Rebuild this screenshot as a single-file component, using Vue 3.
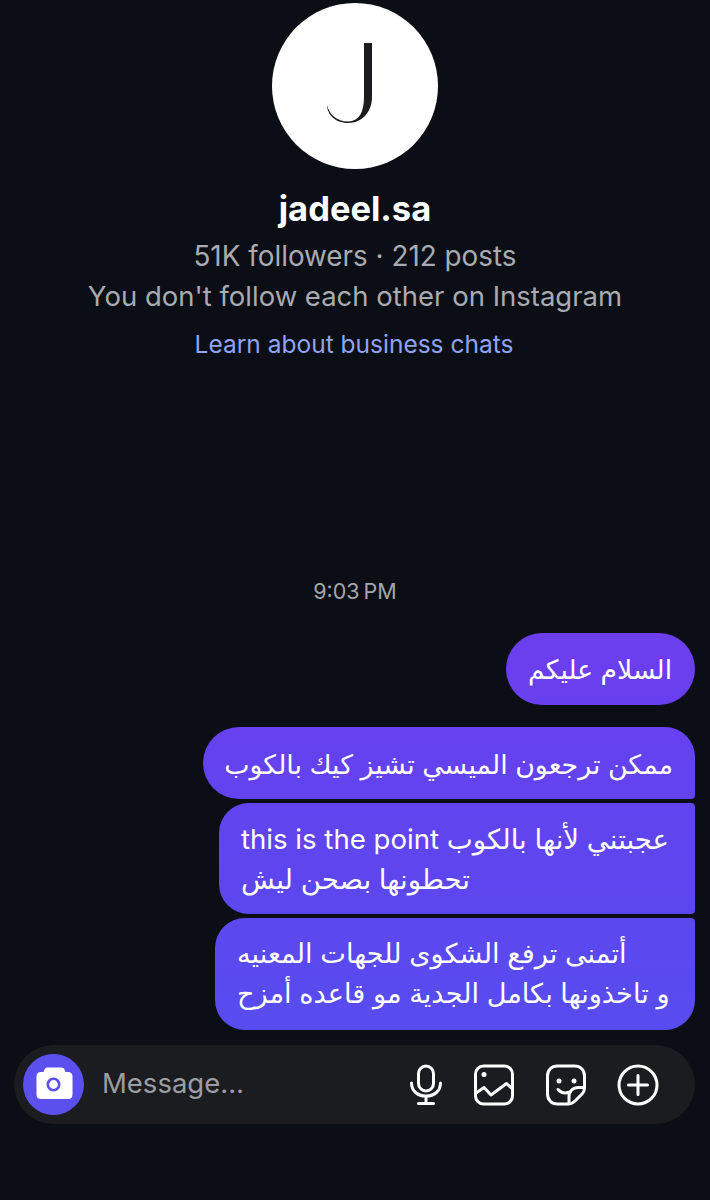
<template>
  <div class="chat">
    <header class="profile">
      <div class="avatar">
        <svg width="166" height="166" viewBox="0 0 166 166">
          <path d="M92 40h8v54c0 15-10 26-24 26-13 0-21-9-21-18 2 9 10 16.500 21 16.500 11 0 16-9 16-24.500z" fill="#1c1c1e" />
        </svg>
      </div>
      <h1 class="name">jadeel.sa</h1>
      <p class="stats counts">51K followers · 212 posts</p>
      <p class="stats">You don't follow each other on Instagram</p>
      <a class="learn">Learn about business chats</a>
    </header>

    <div class="time">9:03&#8201;PM</div>

    <div class="messages">
      <div
        v-for="(msg, index) in messages"
        :key="index"
        class="bubble"
        :class="msg.kind"
        dir="rtl"
      >
        <div v-for="line in msg.lines" :key="line">{{ line }}</div>
      </div>
    </div>

    <div class="composer">
      <div class="camera">
        <svg width="44" height="44" viewBox="0 0 44 44">
          <path d="M15.500 4.500h14c1.500 0 2.500.8 3 2l1 2.500H36c3 0 4.500 1.500 4.500 4.500v18c0 3-1.500 4.500-4.500 4.500H9c-3 0-4.500-1.500-4.500-4.500v-18C4.500 10.500 6 9 9 9h2.500l1-2.500c.5-1.200 1.500-2 3-2z" fill="#fff" />
          <circle cx="21.500" cy="21.500" r="5.700" fill="none" stroke="#5b50ee" stroke-width="2.600" />
        </svg>
      </div>
      <span class="placeholder">Message...</span>
      <div class="actions">
        <svg width="34" height="42" viewBox="0 0 34 42" fill="none" stroke="#fff" stroke-width="3" stroke-linecap="round">
          <rect x="9.500" y="2" width="15" height="25" rx="7.500" />
          <path d="M2.500 19c0 8 6 13 14.500 13s14.500-5 14.500-13M17 32v7.500M9.500 39.500h15" />
        </svg>
        <svg width="42" height="42" viewBox="0 0 42 42" fill="none" stroke="#fff" stroke-width="3" stroke-linejoin="round" stroke-linecap="round">
          <rect x="2.500" y="2" width="37" height="38" rx="8" />
          <circle cx="11" cy="10.500" r="2.500" fill="#fff" stroke="none" />
          <path d="M3 29l8-5.500 7 7.500 15.500-11.500 6 5.500" />
        </svg>
        <svg width="42" height="42" viewBox="0 0 42 42" fill="none" stroke="#fff" stroke-width="3" stroke-linejoin="round" stroke-linecap="round">
          <path d="M39.500 21.500V12c0-6-4-10-10-10H12.500c-6 0-10 4-10 10v18c0 6 4 10 10 10H23c3 0 5-1 7-3l7-7c2-2 2.500-4 2.500-6z" />
          <path d="M24 39.500V33c0-6 4-9.500 9.500-9.500h6" />
          <path d="M13 25.500c3 3.500 8 4 12.500 2.500" />
          <circle cx="14" cy="17" r="2.500" fill="#fff" stroke="none" />
          <circle cx="29" cy="17" r="2.500" fill="#fff" stroke="none" />
        </svg>
        <svg width="42" height="42" viewBox="0 0 42 42" fill="none" stroke="#fff" stroke-width="3" stroke-linecap="round">
          <circle cx="21" cy="21" r="19" />
          <path d="M21 11.500v19M11.500 21h19" />
        </svg>
      </div>
    </div>
  </div>
</template>

<script setup>
const messages = [
  { kind: 'single', lines: ['السلام عليكم'] },
  { kind: 'first', lines: ['ممكن ترجعون الميسي تشيز كيك بالكوب'] },
  { kind: 'middle', lines: ['عجبتني لأنها بالكوب this is the point', 'تحطونها بصحن ليش'] },
  { kind: 'last', lines: ['أتمنى ترفع الشكوى للجهات المعنيه', 'و تاخذونها بكامل الجدية مو قاعده أمزح'] }
]
</script>

<style>
html,
body {
  background: #0b0e14;
}
</style>

<style scoped>
.chat {
  position: relative;
  width: 710px;
  height: 1200px;
  overflow: hidden;
  background: #0b0e14;
  font-family: Inter, "DejaVu Sans", sans-serif;
  color: #fff;
}

.profile {
  display: flex;
  flex-direction: column;
  align-items: center;
  padding-top: 3px;
}

.avatar {
  width: 166px;
  height: 166px;
  border-radius: 50%;
  background: #fff;
}

.name {
  margin: 12px 0 0;
  font-size: 34.500px;
  line-height: 55px;
  font-weight: 700;
}

.stats {
  margin: 0;
  font-size: 27.500px;
  line-height: 40px;
  color: #a8abb1;
}

.counts {
  font-size: 27.850px;
}

.learn {
  margin: 8px 2px 0 0;
  font-size: 24.500px;
  line-height: 40px;
  color: #8ea4f3;
}

.time {
  margin-top: 214px;
  text-align: center;
  font-size: 21.500px;
  line-height: 26px;
  color: #a3a6ac;
}

.messages {
  display: flex;
  flex-direction: column;
  align-items: flex-end;
  gap: 4px;
  margin-top: 29px;
  padding-right: 15px;
}

.bubble {
  box-sizing: border-box;
  padding: 16px 22px 0;
  line-height: 40px;
  text-align: left;
  white-space: nowrap;
  overflow: hidden;
}

.single {
  width: 189px;
  height: 72px;
  margin-bottom: 18px;
  font-size: 26.600px;
  border-radius: 36px;
  background: linear-gradient(#6c3eee, #683fee);
}

.first {
  width: 492px;
  height: 72px;
  padding-top: 17px;
  font-size: 26.800px;
  border-radius: 36px 30px 4px 36px;
  background: linear-gradient(#6641ef, #6243ef);
}

.middle {
  width: 476px;
  height: 111px;
  font-size: 27.600px;
  border-radius: 30px 4px 4px 30px;
  background: linear-gradient(#6144ef, #5c47ef);
}

.last {
  width: 480px;
  height: 112px;
  font-size: 27.200px;
  border-radius: 30px 4px 30px 30px;
  background: linear-gradient(#5c48ef, #574cef);
}

.composer {
  position: absolute;
  left: 14px;
  top: 1045px;
  width: 681px;
  height: 79px;
  box-sizing: border-box;
  display: flex;
  align-items: center;
  padding-left: 9px;
  border-radius: 40px;
  background: #1b1c1f;
}

.camera {
  display: flex;
  align-items: center;
  justify-content: center;
  width: 61px;
  height: 61px;
  border-radius: 50%;
  background: #5b50ee;
}

.placeholder {
  margin: 0 0 3px 18px;
  font-size: 27.500px;
  color: #9b9ea3;
}

.actions {
  display: flex;
  align-items: center;
  gap: 30px;
  margin-left: auto;
  margin-right: 36px;
}
</style>
